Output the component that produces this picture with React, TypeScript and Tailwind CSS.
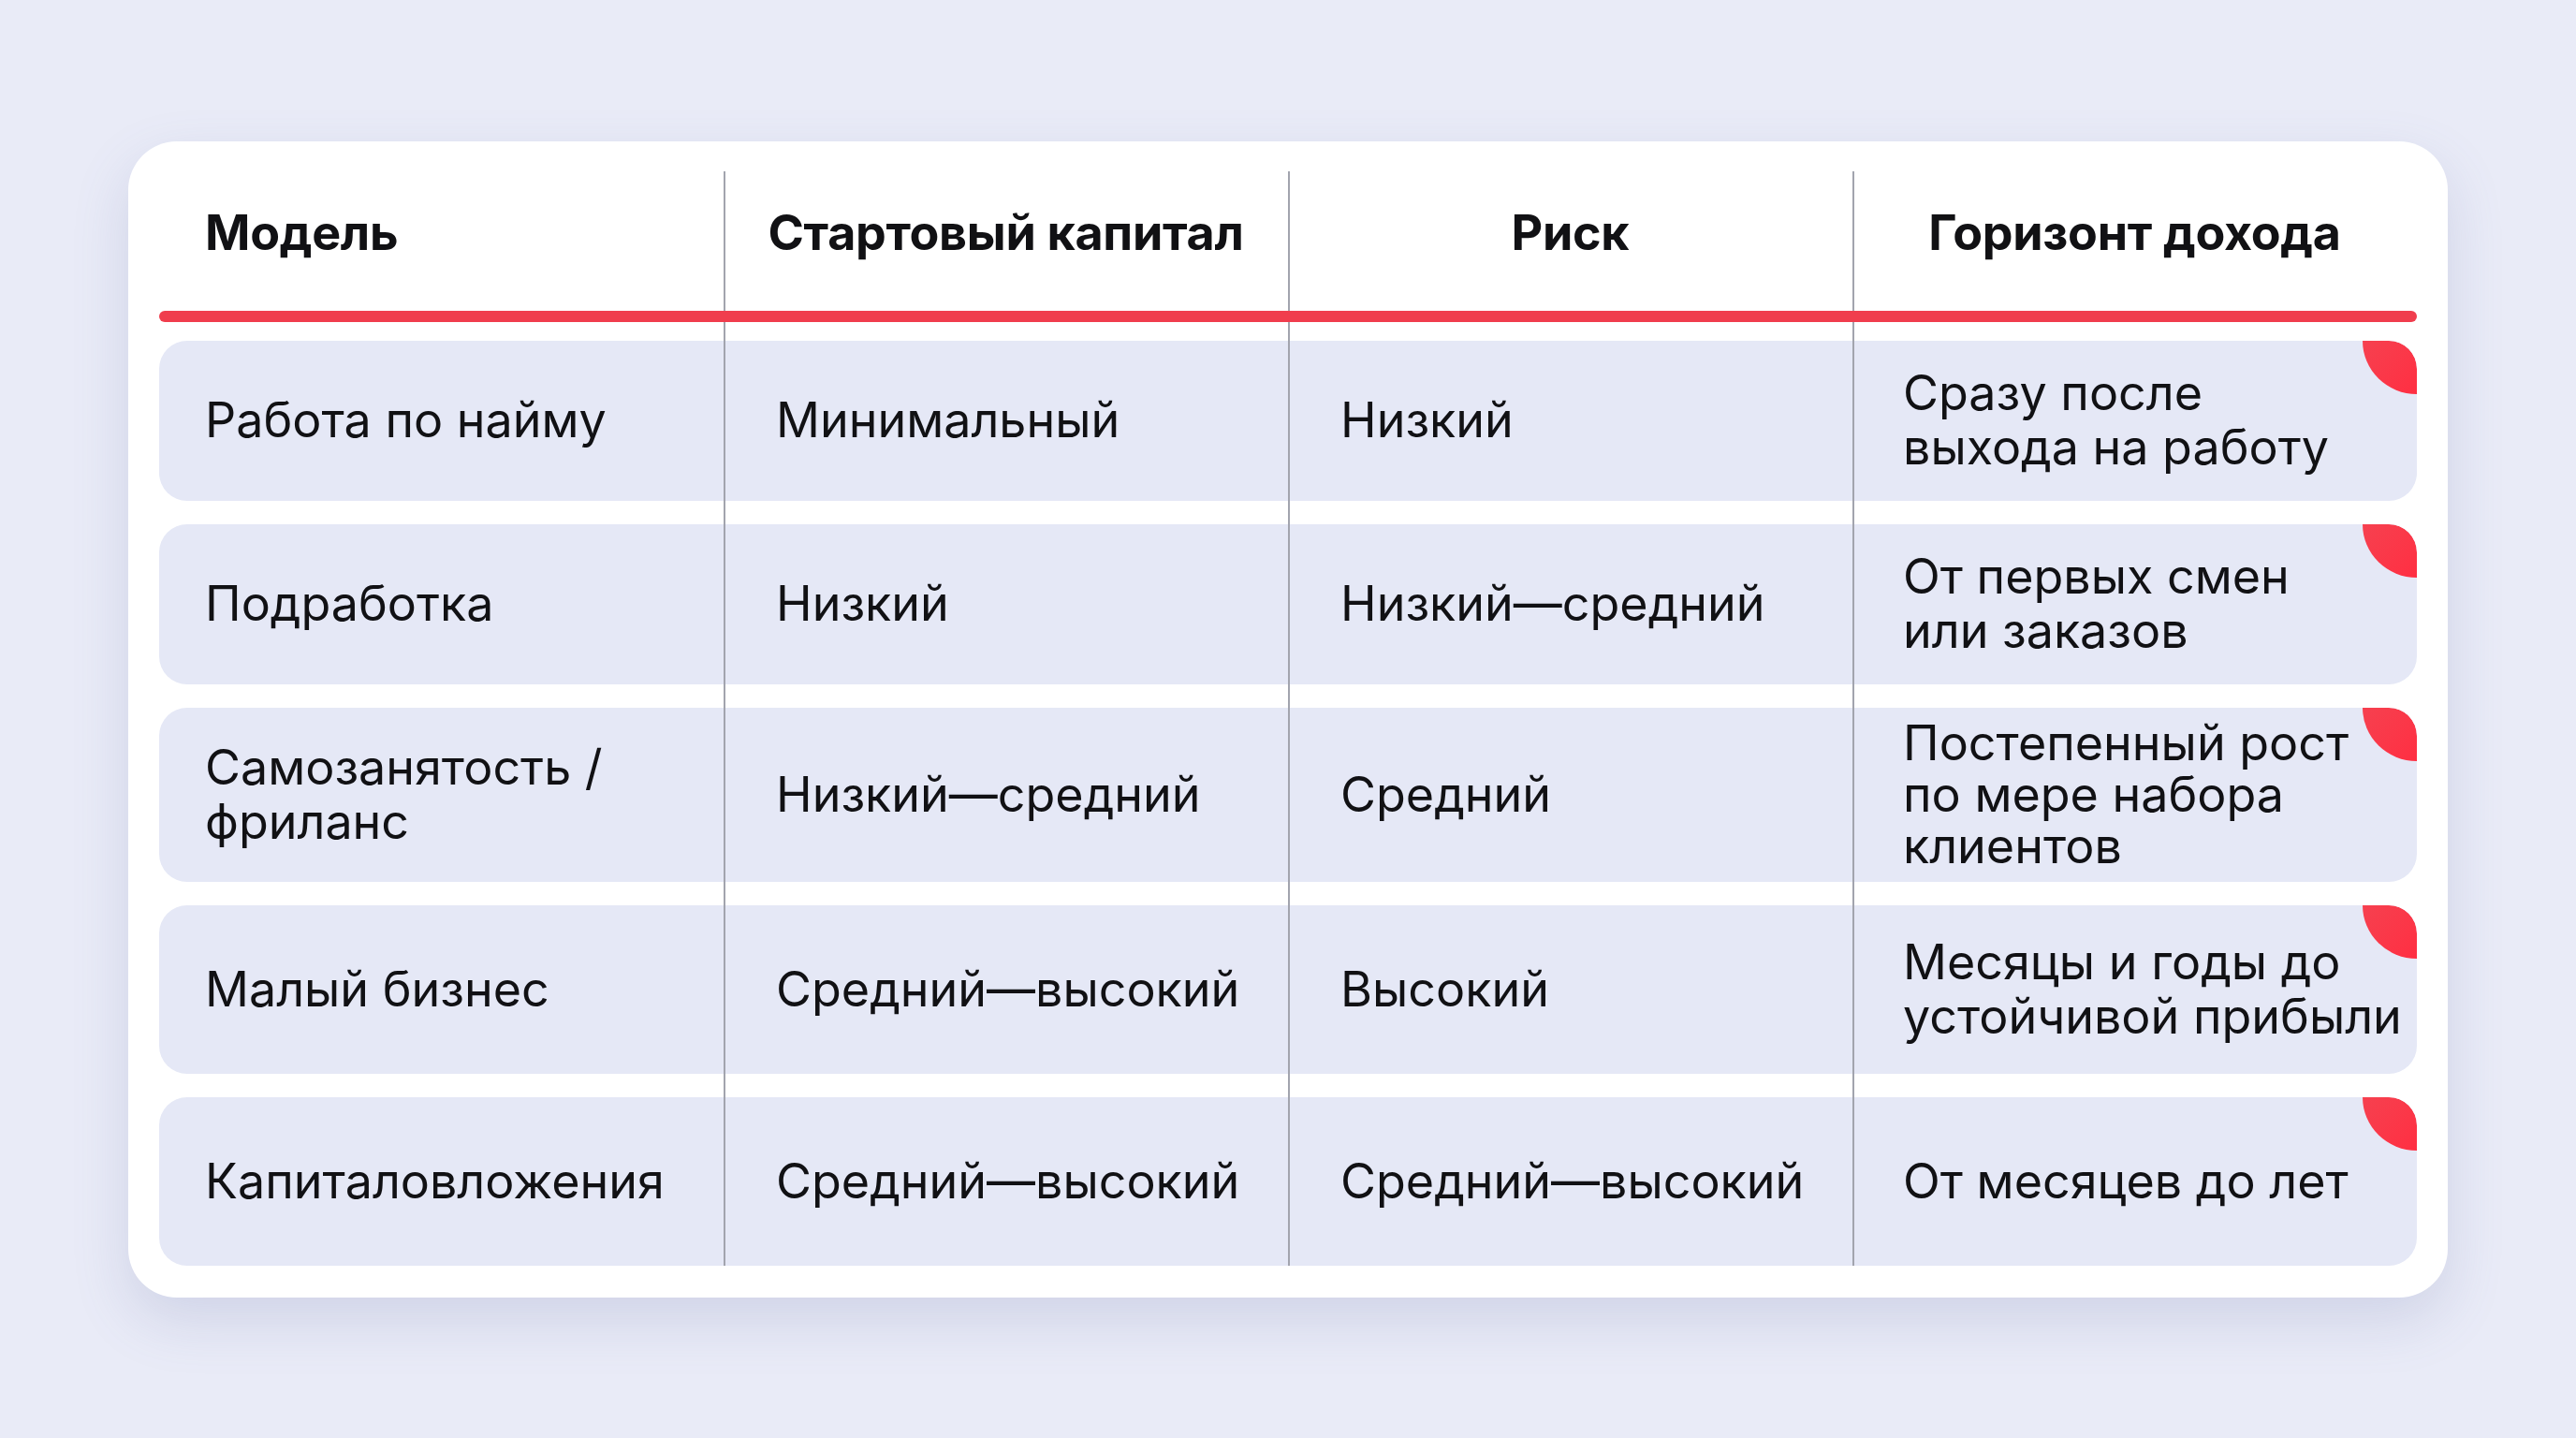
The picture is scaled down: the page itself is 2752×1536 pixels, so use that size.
import React from "react"

type Row = {
  model: string[]
  capital: string
  risk: string
  horizon: string[]
  height: string
}

const rows: Row[] = [
  {
    model: ["Работа по найму"],
    capital: "Минимальный",
    risk: "Низкий",
    horizon: ["Сразу после", "выхода на работу"],
    height: "h-[171px]",
  },
  {
    model: ["Подработка"],
    capital: "Низкий",
    risk: "Низкий—средний",
    horizon: ["От первых смен", "или заказов"],
    height: "h-[171px]",
  },
  {
    model: ["Самозанятость /", "фриланс"],
    capital: "Низкий—средний",
    risk: "Средний",
    horizon: ["Постепенный рост", "по мере набора", "клиентов"],
    height: "h-[186px]",
  },
  {
    model: ["Малый бизнес"],
    capital: "Средний—высокий",
    risk: "Высокий",
    horizon: ["Месяцы и годы до", "устойчивой прибыли"],
    height: "h-[180px]",
  },
  {
    model: ["Капиталовложения"],
    capital: "Средний—высокий",
    risk: "Средний—высокий",
    horizon: ["От месяцев до лет"],
    height: "h-[180px]",
  },
]

function Lines({ lines, tight }: { lines: string[]; tight?: boolean }) {
  return (
    <div className={tight ? "leading-[55px]" : "leading-[58px]"}>
      {lines.map((line) => (
        <div key={line}>{line}</div>
      ))}
    </div>
  )
}

export default function App() {
  return (
    <div
      className="flex h-screen w-full items-center justify-center bg-[#e9ebf7] text-[#111114]"
      style={{ fontFamily: "Inter, 'Noto Sans', sans-serif" }}
    >
      <div className="w-[2478px] rounded-[52px] bg-white px-[33px] pt-[32px] pb-[34px] shadow-[0_24px_60px_rgba(96,106,160,0.18)]">
        <div className="relative">
          {/* column rules */}
          <div className="pointer-events-none absolute inset-0 z-10 grid grid-cols-4">
            <div />
            <div className="border-l-2 border-[#a2a4ae]" />
            <div className="border-l-2 border-[#a2a4ae]" />
            <div className="border-l-2 border-[#a2a4ae]" />
          </div>

          <div className="grid h-[149px] grid-cols-4 items-center pb-[16px] text-[52px] font-bold tracking-[-0.3px]">
            <div className="pl-[49px]">Модель</div>
            <div className="text-center">Стартовый капитал</div>
            <div className="text-center">Риск</div>
            <div className="text-center">Горизонт дохода</div>
          </div>
          <div className="relative z-20 h-[12px] rounded-full bg-[#f03d4d]" />

          <div className="mt-[20px] flex flex-col gap-[25px]">
            {rows.map((row) => (
              <div
                key={row.capital + row.model[0]}
                className={`relative grid grid-cols-4 items-center overflow-hidden rounded-[30px] bg-[#e5e8f6] text-[52px] ${row.height}`}
              >
                <div className="pl-[49px]">
                  <Lines lines={row.model} />
                </div>
                <div className="pl-[56px]">{row.capital}</div>
                <div className="pl-[56px]">{row.risk}</div>
                <div className="pl-[54px]">
                  <Lines lines={row.horizon} tight={row.horizon.length > 2} />
                </div>
                <div className="absolute top-0 right-0 h-[57px] w-[58px] rounded-tr-[30px] rounded-bl-[100%] bg-gradient-to-br from-[#f6404f] to-[#ff2e42]" />
              </div>
            ))}
          </div>
        </div>
      </div>
    </div>
  )
}
